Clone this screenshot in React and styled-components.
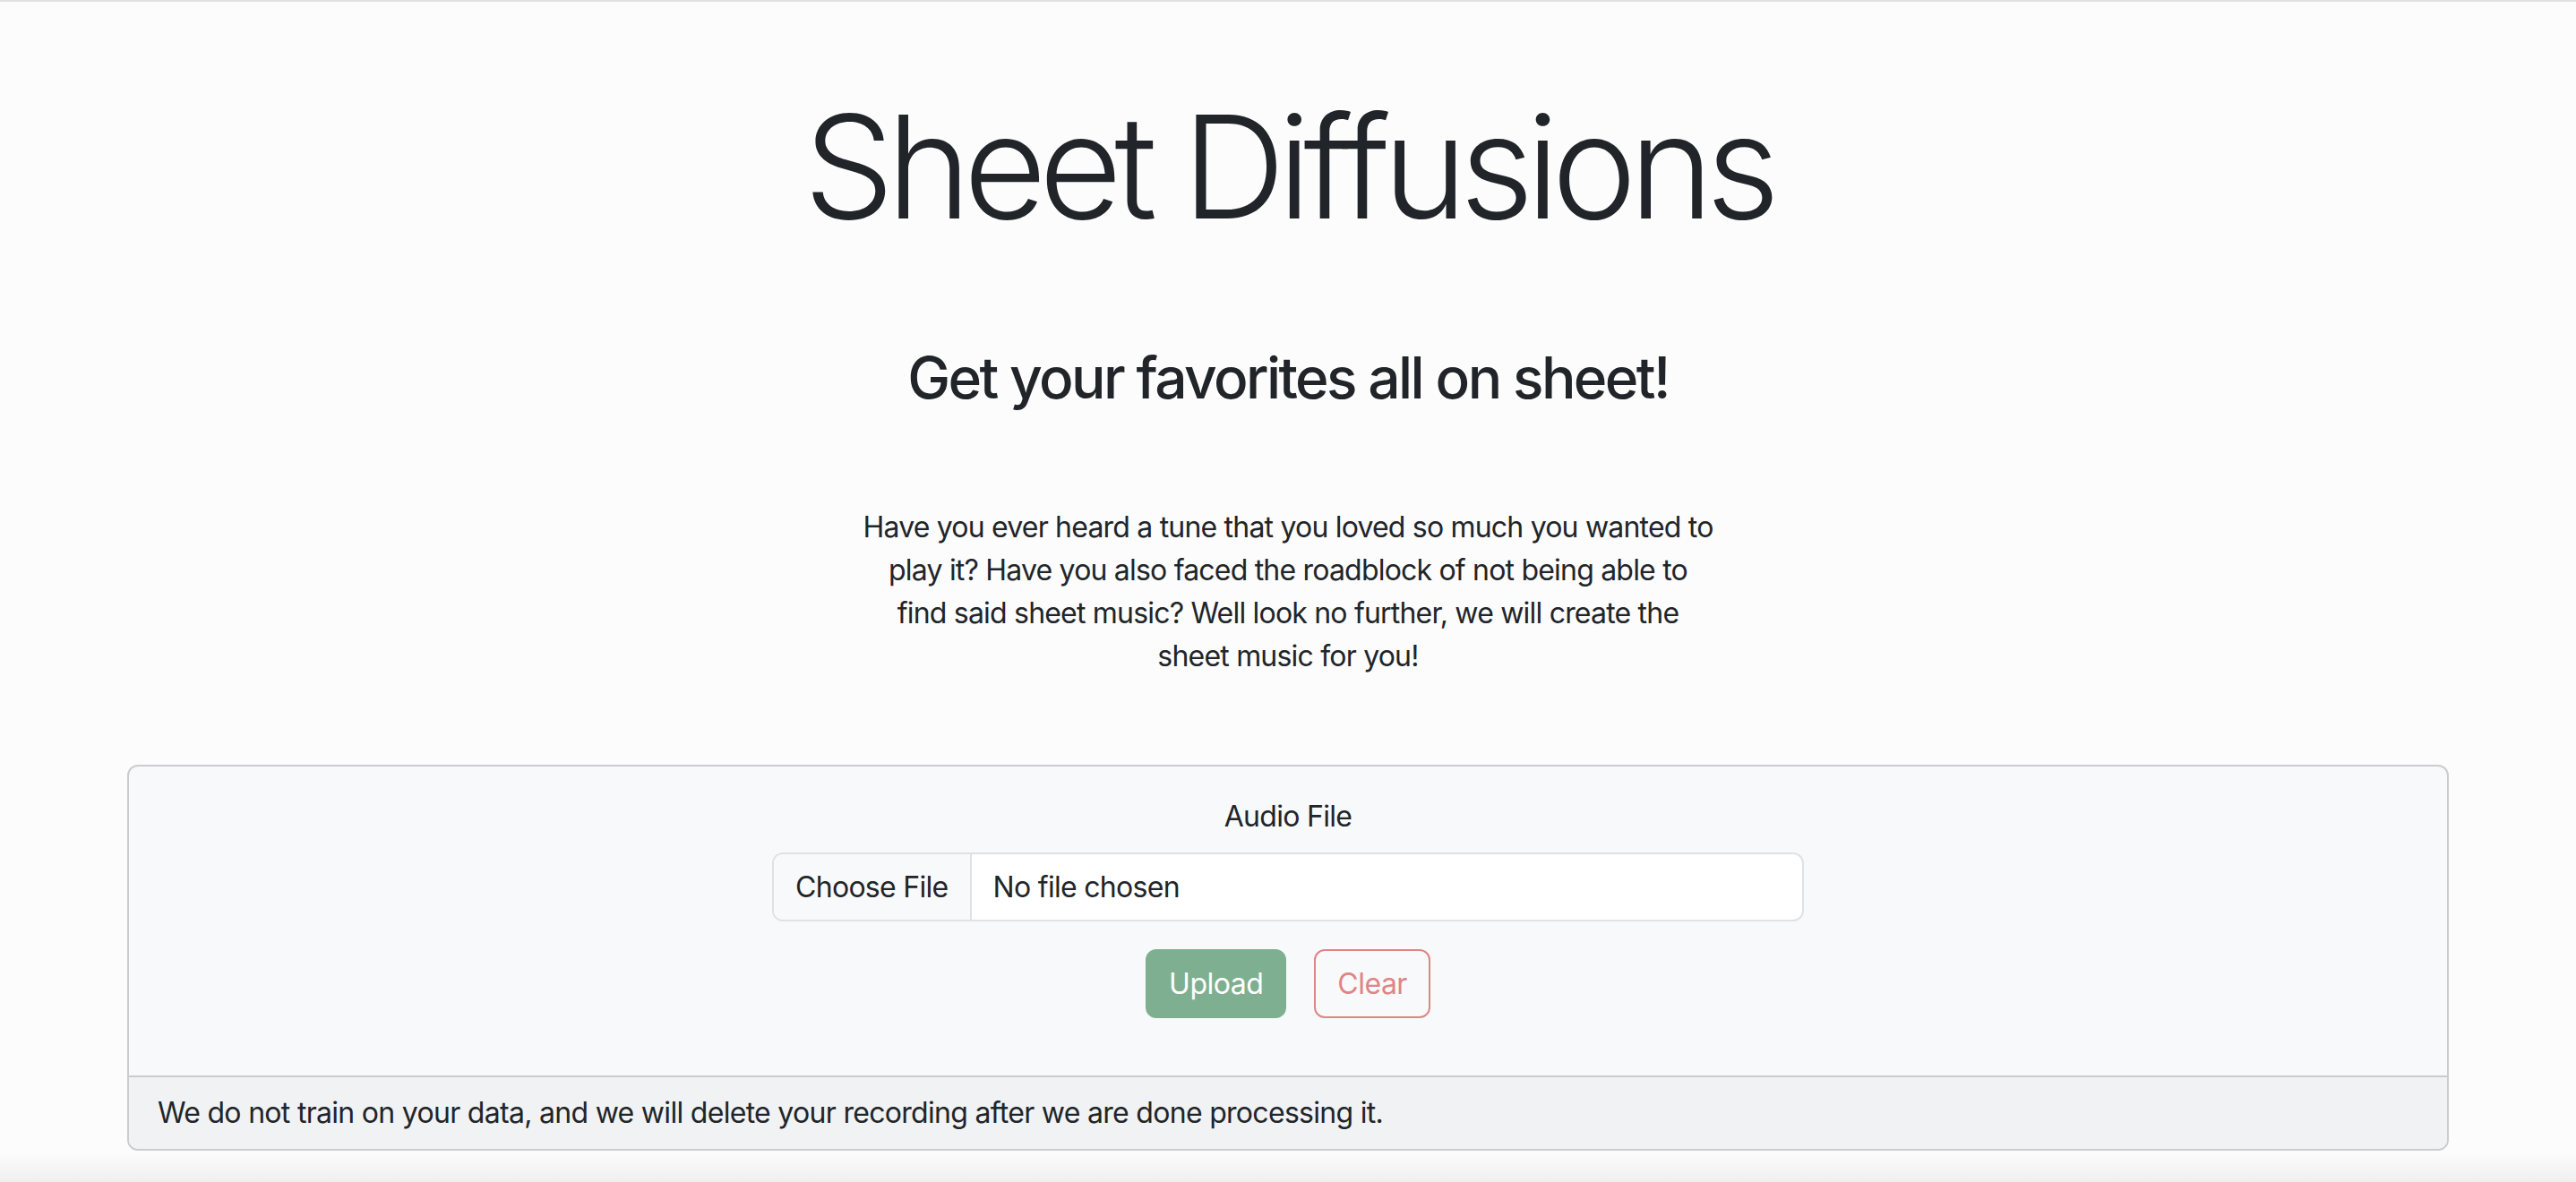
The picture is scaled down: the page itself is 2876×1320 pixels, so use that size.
import React from 'react';
import styled, { createGlobalStyle } from 'styled-components';

const GlobalStyle = createGlobalStyle`
  html, body {
    margin: 0;
    padding: 0;
    background: #fcfcfc;
    color: #212529;
    font-family: Inter, "Noto Sans", "Liberation Sans", sans-serif;
    -webkit-font-smoothing: antialiased;
  }
  * {
    box-sizing: border-box;
  }
`;

const Page = styled.main`
  min-height: 1320px;
  border-top: 2px solid #e0e0e0;
  display: flex;
  flex-direction: column;
  align-items: center;
  position: relative;
  &::after {
    content: '';
    position: absolute;
    left: 0;
    right: 0;
    bottom: 0;
    height: 34px;
    background: linear-gradient(to bottom, rgba(0, 0, 0, 0), rgba(0, 0, 0, 0.05));
    pointer-events: none;
  }
`;

const Title = styled.h1`
  margin: 88px 0 0;
  font-size: 160px;
  font-weight: 300;
  line-height: 1.2;
  letter-spacing: -8.5px;
  text-align: center;
`;

const Subtitle = styled.h2`
  margin: 102px 0 0;
  font-size: 64px;
  font-weight: 500;
  line-height: 1.2;
  letter-spacing: -2.6px;
  text-align: center;
`;

const Intro = styled.p`
  margin: 104px 0 0;
  width: 1000px;
  font-size: 32px;
  line-height: 48px;
  text-align: center;
  letter-spacing: -0.8px;
`;

const Container = styled.section`
  width: 2640px;
  padding: 0 24px;
  margin-top: 97px;
`;

const Card = styled.div`
  background: #f8f9fa;
  border: 2px solid #cbcccd;
  border-radius: 12px;
  overflow: hidden;
`;

const CardBody = styled.div`
  padding: 32px 32px 64px;
  display: flex;
  flex-direction: column;
  align-items: center;
`;

const Label = styled.label`
  font-size: 32px;
  line-height: 48px;
  margin-bottom: 16px;
  letter-spacing: -0.7px;
`;

const FileInput = styled.div`
  width: 1152px;
  height: 77px;
  display: flex;
  background: #fff;
  border: 2px solid #dee2e6;
  border-radius: 12px;
  overflow: hidden;
  font-size: 32px;
  letter-spacing: -0.7px;
`;

const FileButton = styled.span`
  display: flex;
  align-items: center;
  padding: 0 24px;
  background: #f8f9fa;
  border-right: 2px solid #dee2e6;
`;

const FileName = styled.span`
  display: flex;
  align-items: center;
  padding: 0 24px;
`;

const Actions = styled.div`
  display: flex;
  gap: 31px;
  margin-top: 31px;
`;

const Button = styled.button`
  height: 77px;
  padding: 0 24px;
  font-family: inherit;
  font-size: 32px;
  letter-spacing: -0.5px;
  border-radius: 12px;
  border: 2px solid ${(p) => (p.$outline ? '#e08487' : '#7faf91')};
  background: ${(p) => (p.$outline ? 'transparent' : '#7faf91')};
  color: ${(p) => (p.$outline ? '#e08487' : '#ffffff')};
`;

const CardFooter = styled.div`
  padding: 16px 32px;
  background: #f1f2f3;
  border-top: 2px solid #cbcccd;
  font-size: 32px;
  line-height: 48px;
  letter-spacing: -0.7px;
`;

export default function App() {
  return (
    <>
      <GlobalStyle />
      <Page>
        <Title>Sheet Diffusions</Title>
        <Subtitle>Get your favorites all on sheet!</Subtitle>
        <Intro>
          Have you ever heard a tune that you loved so much you wanted to
          <br />
          play it? Have you also faced the roadblock of not being able to
          <br />
          find said sheet music? Well look no further, we will create the
          <br />
          sheet music for you!
        </Intro>
        <Container>
          <Card>
            <CardBody>
              <Label>Audio File</Label>
              <FileInput>
                <FileButton>Choose File</FileButton>
                <FileName>No file chosen</FileName>
              </FileInput>
              <Actions>
                <Button disabled>Upload</Button>
                <Button $outline disabled>
                  Clear
                </Button>
              </Actions>
            </CardBody>
            <CardFooter>
              We do not train on your data, and we will delete your recording
              after we are done processing it.
            </CardFooter>
          </Card>
        </Container>
      </Page>
    </>
  );
}
